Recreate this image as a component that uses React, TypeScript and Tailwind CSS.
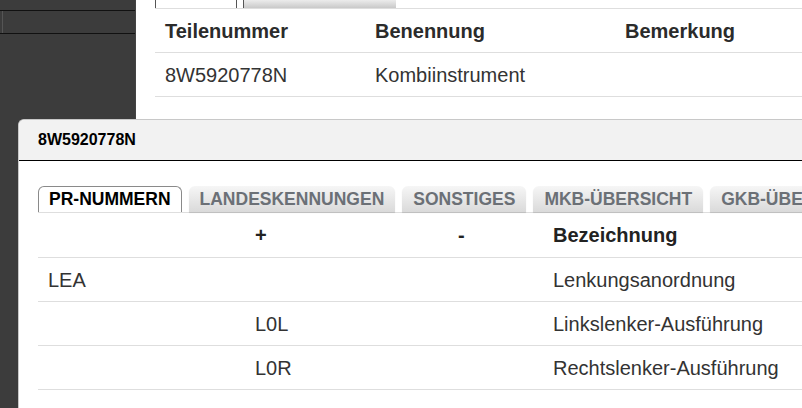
import React from 'react';

const font = { fontFamily: '"Liberation Sans", Arial, sans-serif' };

const dialogTabs = ['PR-NUMMERN', 'LANDESKENNUNGEN', 'SONSTIGES', 'MKB-ÜBERSICHT', 'GKB-ÜBERSICHT'];

const prRows = [
  { code: 'LEA', plus: '', minus: '', text: 'Lenkungsanordnung' },
  { code: '', plus: 'L0L', minus: '', text: 'Linkslenker-Ausführung' },
  { code: '', plus: 'L0R', minus: '', text: 'Rechtslenker-Ausführung' },
];

export default function App() {
  return (
    <div className="relative w-[802px] h-[408px] overflow-hidden bg-white flex" style={font}>
      {/* sidebar */}
      <aside className="w-[136px] shrink-0 bg-[#3c3c3c] border-r border-[#444]">
        <div className="h-[11px] border-b border-[#111]" />
        <div className="h-[23px] border-b border-[#111] pl-[2px]">
          <div className="h-full border-l border-[#555]" />
        </div>
      </aside>

      {/* page behind the dialog */}
      <main className="flex-1 pl-[19px]">
        <div className="flex items-end h-[9px] border-b border-[#dedede]">
          <div className="w-[82px] h-[8px] bg-white border-x border-[#555]" />
          <div className="ml-[6px] w-[153px] h-[8px] border-l border-[#555] bg-linear-to-b from-[#ececec] to-[#c9c9c9]" />
        </div>
        <div className="flex h-[44px] items-center border-b border-[#dedede] text-[20px] font-bold text-[#2b2b2b]">
          <div className="w-[210px] pl-[10px]">Teilenummer</div>
          <div className="w-[250px] pl-[10px]">Benennung</div>
          <div className="pl-[10px]">Bemerkung</div>
        </div>
        <div className="flex h-[44px] items-center border-b border-[#dedede] text-[20px] text-[#333]">
          <div className="w-[210px] pl-[10px]">8W5920778N</div>
          <div className="w-[250px] pl-[10px]">Kombiinstrument</div>
          <div className="pl-[10px]"></div>
        </div>
      </main>

      {/* dialog */}
      <section className="absolute left-[18px] top-[119px] w-[820px] bottom-0 bg-white border-t border-l border-[#c8c8c8] rounded-tl-[6px] overflow-hidden">
        <div className="h-[41px] bg-[#f2f2f2] border-b border-black flex items-center pl-[19px] text-[16px] font-bold text-black">
          8W5920778N
        </div>
        <div className="pl-[19px] pt-[25px]">
          <div className="flex gap-[7px] h-[27px] border-b border-[#dedede] whitespace-nowrap">
            {dialogTabs.map((t, i) =>
              i === 0 ? (
                <div
                  key={t}
                  className="h-[26px] px-[10px] flex items-center bg-white border border-b-0 border-[#8a8a8a] rounded-t-[6px] text-[17.5px] font-bold text-black"
                >
                  {t}
                </div>
              ) : (
                <div
                  key={t}
                  className="h-[26px] px-[11px] flex items-center rounded-t-[6px] bg-linear-to-b from-[#f6f6f6] to-[#dadada] shadow-[0_1px_1px_rgba(0,0,0,0.15)] text-[17.5px] font-bold text-[#6b7076]"
                >
                  {t}
                </div>
              )
            )}
          </div>
          <div className="flex h-[45px] items-center border-b border-[#dedede] text-[20px] font-bold text-[#222]">
            <div className="w-[207px] pl-[10px]"></div>
            <div className="w-[203px] pl-[10px]">+</div>
            <div className="w-[95px] pl-[10px]">-</div>
            <div className="pl-[10px]">Bezeichnung</div>
          </div>
          {prRows.map((r, i) => (
            <div key={i} className="flex h-[44px] items-center border-b border-[#dedede] text-[20px] text-[#333]">
              <div className="w-[207px] pl-[10px]">{r.code}</div>
              <div className="w-[203px] pl-[10px]">{r.plus}</div>
              <div className="w-[95px] pl-[10px]">{r.minus}</div>
              <div className="pl-[10px]">{r.text}</div>
            </div>
          ))}
        </div>
      </section>
    </div>
  );
}
